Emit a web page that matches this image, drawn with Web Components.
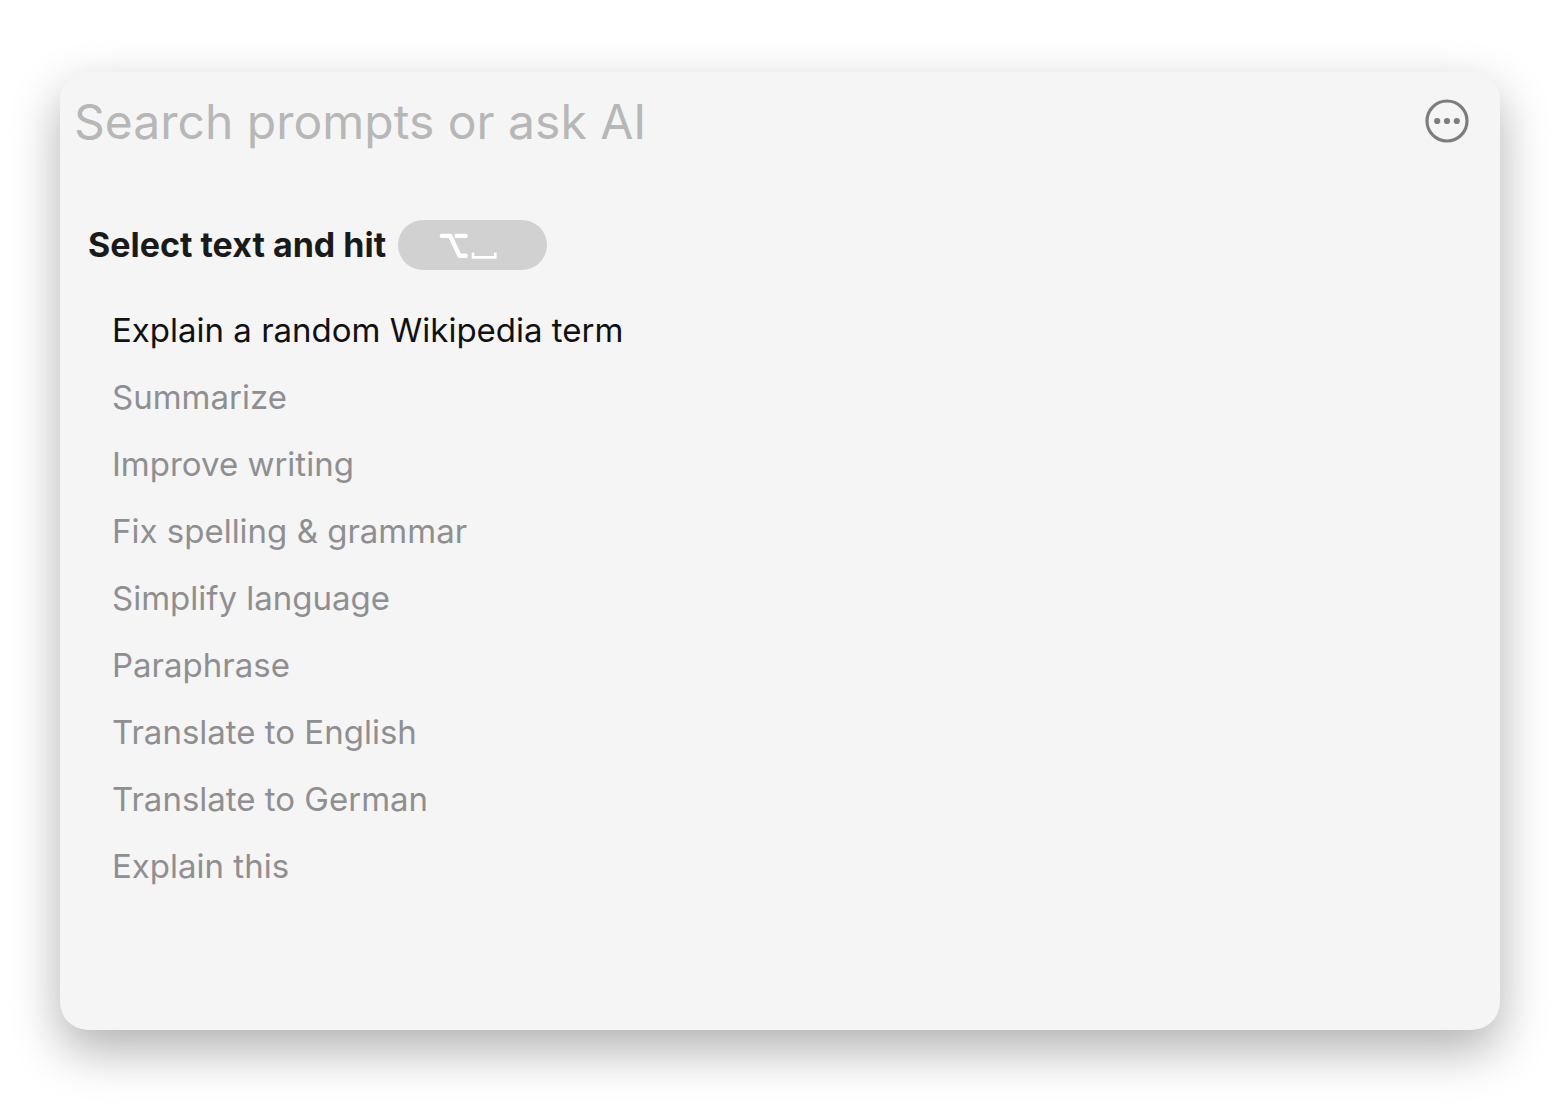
<!DOCTYPE html>
<html lang="en">
<head>
<meta charset="utf-8">
<title>Prompt launcher</title>
<style>
  body {
    margin: 0;
    min-height: 100vh;
    box-sizing: border-box;
    padding: 72px 60px 80px;
    display: flex;
    background: #fff;
    font-family: Inter, "Liberation Sans", sans-serif;
  }
</style>
</head>
<body>
<launcher-window>
  <search-bar slot="header" placeholder="Search prompts or ask AI"></search-bar>
  <shortcut-hint slot="hint">Select text and hit</shortcut-hint>
  <prompt-item active>Explain a random Wikipedia term</prompt-item>
  <prompt-item>Summarize</prompt-item>
  <prompt-item>Improve writing</prompt-item>
  <prompt-item>Fix spelling &amp; grammar</prompt-item>
  <prompt-item>Simplify language</prompt-item>
  <prompt-item>Paraphrase</prompt-item>
  <prompt-item>Translate to English</prompt-item>
  <prompt-item>Translate to German</prompt-item>
  <prompt-item>Explain this</prompt-item>
</launcher-window>
<script>
const define = (name, html, setup) => {
  const template = document.createElement('template');
  template.innerHTML = html;
  customElements.define(name, class extends HTMLElement {
    constructor() {
      super();
      this.attachShadow({ mode: 'open' }).append(template.content.cloneNode(true));
    }
    connectedCallback() { if (setup) setup(this, this.shadowRoot); }
  });
};

define('launcher-window', `
  <style>
    :host {
      flex: 1; min-width: 0; display: flex; flex-direction: column;
      box-sizing: border-box; border-radius: 28px; background: #f5f5f5;
      box-shadow: 0 20px 50px rgba(0, 0, 0, .31);
    }
    main { padding: 66px 28px 60px; }
    .list { display: flex; flex-direction: column; padding: 27px 24px 0; }
  </style>
  <slot name="header"></slot>
  <main>
    <slot name="hint"></slot>
    <div class="list"><slot></slot></div>
  </main>
`);

define('search-bar', `
  <style>
    :host { display: block; }
    form { display: flex; align-items: center; gap: 24px; padding: 18px 28px 0 14px; }
    input {
      flex: 1; min-width: 0; height: 64px; padding: 0; margin: 0; border: 0; outline: 0;
      background: none; color: #1a1a1a; font: 400 48px/64px Inter, "Liberation Sans", sans-serif;
    }
    input::placeholder { color: #b7b7b7; opacity: 1; }
    button { display: flex; padding: 0; border: 0; background: none; color: #7d7d7d; }
  </style>
  <form>
    <input type="text" aria-label="Search prompts or ask AI">
    <button type="button" aria-label="More options">
      <svg width="50" height="50" viewBox="0 0 50 50" fill="none" aria-hidden="true">
        <circle cx="25" cy="24" r="20" stroke="currentColor" stroke-width="3.2"/>
        <g fill="currentColor"><circle cx="15.2" cy="24" r="3.1"/><circle cx="25" cy="24" r="3.1"/><circle cx="34.8" cy="24" r="3.1"/></g>
      </svg>
    </button>
  </form>
`, (host, root) => {
  root.querySelector('input').placeholder = host.getAttribute('placeholder');
});

define('shortcut-hint', `
  <style>
    :host { display: flex; align-items: center; gap: 12px; }
    h2 { margin: 0; color: #1a1a1a; font-size: 34px; font-weight: 700; line-height: 50px; }
    kbd {
      display: flex; align-items: center; justify-content: center;
      width: 149px; height: 50px; border-radius: 25px; background: #d1d1d1;
    }
  </style>
  <h2><slot></slot></h2>
  <kbd aria-label="Option Space">
    <svg width="149" height="50" viewBox="0 0 149 50" fill="none" stroke="#fff" stroke-linecap="round" stroke-linejoin="round" aria-hidden="true">
      <path d="M43.8 15.9H52.2L61.5 35.8H67.6M58.4 15.9H67.6" stroke-width="4.4"/>
      <path d="M75 32.6V37.4H97.3V32.6" stroke-width="2.6" stroke-linecap="butt" stroke-linejoin="miter"/>
    </svg>
  </kbd>
`);

define('prompt-item', `
  <style>
    :host { display: block; color: #8f8f91; }
    :host([active]) { color: #111; }
    button {
      display: block; width: 100%; padding: 0; border: 0; background: none;
      color: inherit; font: inherit; font-size: 33px; line-height: 67px; text-align: left;
    }
  </style>
  <button type="button"><slot></slot></button>
`);
</script>
</body>
</html>
